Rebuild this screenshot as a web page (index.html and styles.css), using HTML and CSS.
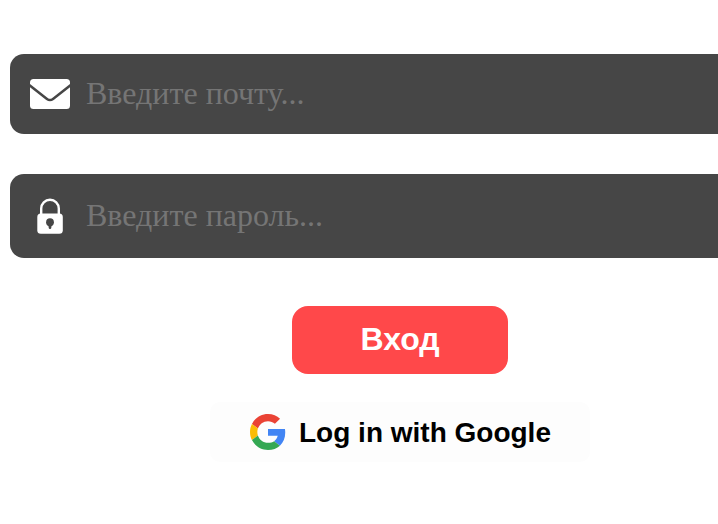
FILE: index.html
```html
<!DOCTYPE html>
<html lang="ru">
<head>
<meta charset="utf-8">
<title>Вход</title>
<link rel="stylesheet" href="styles.css">
</head>
<body>
<form class="login">
  <label class="field field-mail">
    <svg class="field-icon" viewBox="0 0 40 40">
      <rect y="5" width="40" height="30" rx="3.5" fill="#fff"/>
      <path d="M-1 10.8 L17 24.9 Q20 27.2 23 24.9 L41 10.8" fill="none" stroke="#464646" stroke-width="2.5"/>
    </svg>
    <input class="field-input" type="email" placeholder="Введите почту...">
  </label>
  <label class="field field-password">
    <svg class="field-icon" viewBox="0 0 40 40">
      <path d="M11.2 20V12.5a8.8 8.8 0 0 1 17.6 0V20" fill="none" stroke="#fff" stroke-width="2.4"/>
      <rect x="7.3" y="17.5" width="25.5" height="20.2" rx="3.5" fill="#fff"/>
      <circle cx="20" cy="26.2" r="3.9" fill="#464646"/>
      <path d="M18.2 28h3.6l-.5 3.8a1.3 1.3 0 0 1-2.6 0z" fill="#464646"/>
    </svg>
    <input class="field-input" type="password" placeholder="Введите пароль...">
  </label>
  <button class="submit" type="button">Вход</button>
  <button class="google" type="button">
    <svg class="google-icon" viewBox="0 0 48 48">
      <path fill="#EA4335" d="M24 9.5c3.54 0 6.71 1.22 9.21 3.6l6.85-6.85C35.9 2.38 30.47 0 24 0 14.62 0 6.51 5.38 2.56 13.22l7.98 6.19C12.43 13.72 17.74 9.5 24 9.5z"/>
      <path fill="#4285F4" d="M46.98 24.55c0-1.57-.15-3.09-.38-4.55H24v9.02h12.94c-.58 2.96-2.26 5.48-4.78 7.18l7.73 6c4.51-4.18 7.09-10.36 7.09-17.65z"/>
      <path fill="#FBBC05" d="M10.53 28.59c-.48-1.45-.76-2.99-.76-4.59s.27-3.14.76-4.59l-7.98-6.19C.92 16.46 0 20.12 0 24c0 3.88.92 7.54 2.56 10.78l7.97-6.19z"/>
      <path fill="#34A853" d="M24 48c6.48 0 11.93-2.13 15.89-5.81l-7.73-6c-2.15 1.45-4.92 2.3-8.16 2.3-6.26 0-11.57-4.22-13.47-9.91l-7.98 6.19C6.51 42.62 14.62 48 24 48z"/>
    </svg>
    <span class="google-text">Log in with Google</span>
  </button>
</form>
</body>
</html>
```
FILE: styles.css
```css
* {
  box-sizing: border-box;
}

body {
  margin: 0;
  background: #fff;
  overflow: hidden;
}

.login {
  display: flex;
  flex-direction: column;
  align-items: center;
  width: 780px;
  margin: 54px 0 0 10px;
}

.field {
  display: flex;
  align-items: center;
  gap: 14px;
  width: 100%;
  padding: 0 20px;
  border-radius: 14px;
  background: #464646;
}

.field-mail {
  height: 80px;
  margin-bottom: 40px;
}

.field-password {
  height: 84px;
  margin-bottom: 48px;
}

.field-icon {
  flex: none;
  width: 40px;
  height: 40px;
}

.field-input {
  flex: 1;
  min-width: 0;
  padding: 0 2px 2px;
  border: 0;
  outline: 0;
  background: transparent;
  color: #fff;
  font: 32px "Liberation Serif", serif;
}

.field-input::placeholder {
  color: #757575;
}

.submit {
  width: 216px;
  height: 68px;
  margin-bottom: 28px;
  padding: 0 0 2px;
  border: 0;
  border-radius: 16px;
  background: #ff484a;
  color: #fff;
  font: bold 32px "Liberation Sans", sans-serif;
}

.google {
  display: flex;
  align-items: center;
  justify-content: center;
  gap: 13px;
  width: 380px;
  height: 60px;
  padding: 0 0 0 1px;
  border: 0;
  border-radius: 10px;
  background: #fdfdfd;
  color: #000;
  font: bold 28px "Liberation Sans", sans-serif;
}

.google-icon {
  width: 36px;
  height: 36px;
}

.google-text {
  padding-top: 1px;
}
```
